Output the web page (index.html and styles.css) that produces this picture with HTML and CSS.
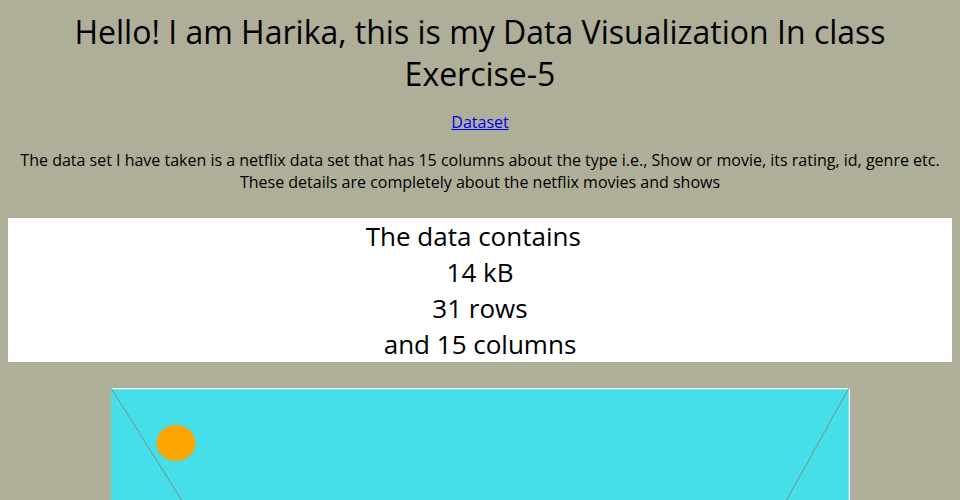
FILE: index.html
```html
<!DOCTYPE html>
<html>
  <head>
    <meta charset="UTF-8">
    <title>Exercise-5</title>
    <link rel="stylesheet" href="styles.css">
  </head>
  <body>
    <h1 class="title">Hello! I am Harika, this is my Data Visualization In class Exercise-5</h1>
    <p class="link"><a href="#">Dataset</a></p>
    <p class="intro">The data set I have taken is a netflix data set that has 15 columns about the type i.e., Show or movie, its rating, id, genre etc. These details are completely about the netflix movies and shows</p>
    <div class="summary">
      <div>The data contains&nbsp;&nbsp;</div>
      <div>14 kB</div>
      <div>31 rows</div>
      <div>and 15 columns</div>
    </div>
    <div class="chart-wrap">
      <svg class="chart" width="739" height="400" viewBox="0 0 739 400">
        <rect x="0" y="0" width="739" height="400" fill="#44dfe9"/>
        <line x1="0" y1="0.5" x2="739" y2="0.5" stroke="#fff" stroke-width="1.5"/>
        <line x1="738.5" y1="0" x2="738.5" y2="400" stroke="#fff" stroke-width="1.5"/>
        <line x1="0" y1="0" x2="252" y2="400" stroke="#888" stroke-width="1"/>
        <line x1="738" y1="0" x2="515" y2="400" stroke="#888" stroke-width="1"/>
        <ellipse cx="65" cy="55" rx="19.5" ry="18" fill="orange"/>
      </svg>
    </div>
  </body>
</html>
```
FILE: styles.css
```css
body {
  background-color: #afae98;
  font-family: 'Open Sans', sans-serif;
  text-align: center;
  color: #000;
}

.title {
  font-size: 32px;
  line-height: 42px;
  font-weight: normal;
  margin: 3px 0 16px;
}

.intro {
  font-size: 16px;
}

.summary {
  background-color: #fff;
  font-size: 26px;
  line-height: 36px;
  margin-top: 25px;
}

.chart-wrap {
  margin-top: 26px;
}

.chart {
  display: block;
  margin: 0 auto;
}
```
